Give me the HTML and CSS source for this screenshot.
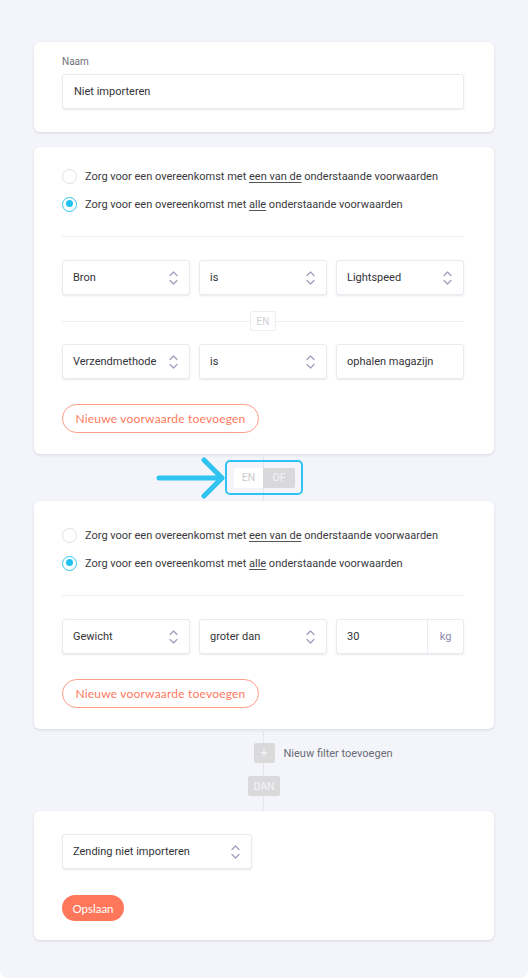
FILE: index.html
```html
<!DOCTYPE html>
<html lang="nl">
<head>
<meta charset="utf-8">
<title>Filter</title>
<link rel="stylesheet" href="styles.css">
</head>
<body>
<div class="page">
  <section class="card card-name">
    <div class="label">Naam</div>
    <div class="field">Niet importeren</div>
  </section>

  <section class="card card-cond">
    <div class="radios">
      <label class="radio"><span class="dot"></span><span>Zorg voor een overeenkomst met <u>een van de</u> onderstaande voorwaarden</span></label>
      <label class="radio"><span class="dot on"></span><span>Zorg voor een overeenkomst met <u>alle</u> onderstaande voorwaarden</span></label>
    </div>
    <div class="rule"></div>
    <div class="row">
      <div class="select">Bron<svg class="chev" viewBox="0 0 9 16"><path d="M1 5.5 4.5 2 8 5.5M1 10.5 4.5 14 8 10.5"/></svg></div>
      <div class="select">is<svg class="chev" viewBox="0 0 9 16"><path d="M1 5.5 4.5 2 8 5.5M1 10.5 4.5 14 8 10.5"/></svg></div>
      <div class="select">Lightspeed<svg class="chev" viewBox="0 0 9 16"><path d="M1 5.5 4.5 2 8 5.5M1 10.5 4.5 14 8 10.5"/></svg></div>
    </div>
    <div class="and-sep"><span class="tag">EN</span></div>
    <div class="row">
      <div class="select">Verzendmethode<svg class="chev" viewBox="0 0 9 16"><path d="M1 5.5 4.5 2 8 5.5M1 10.5 4.5 14 8 10.5"/></svg></div>
      <div class="select">is<svg class="chev" viewBox="0 0 9 16"><path d="M1 5.5 4.5 2 8 5.5M1 10.5 4.5 14 8 10.5"/></svg></div>
      <div class="select">ophalen magazijn</div>
    </div>
    <button class="btn-outline">Nieuwe voorwaarde toevoegen</button>
  </section>

  <div class="connector conn-toggle">
    <svg class="arrow" viewBox="0 0 72 42"><path d="M3 21H66M48 3 66 21 48 39"/></svg>
    <div class="toggle">
      <span class="seg seg-off">EN</span><span class="seg seg-on">OF</span>
    </div>
  </div>

  <section class="card card-cond card-cond2">
    <div class="radios">
      <label class="radio"><span class="dot"></span><span>Zorg voor een overeenkomst met <u>een van de</u> onderstaande voorwaarden</span></label>
      <label class="radio"><span class="dot on"></span><span>Zorg voor een overeenkomst met <u>alle</u> onderstaande voorwaarden</span></label>
    </div>
    <div class="rule"></div>
    <div class="row">
      <div class="select">Gewicht<svg class="chev" viewBox="0 0 9 16"><path d="M1 5.5 4.5 2 8 5.5M1 10.5 4.5 14 8 10.5"/></svg></div>
      <div class="select">groter dan<svg class="chev" viewBox="0 0 9 16"><path d="M1 5.5 4.5 2 8 5.5M1 10.5 4.5 14 8 10.5"/></svg></div>
      <div class="select with-unit"><span class="val">30</span><span class="unit">kg</span></div>
    </div>
    <button class="btn-outline btn-gap">Nieuwe voorwaarde toevoegen</button>
  </section>

  <div class="connector conn-add">
    <div class="add-row">
      <span></span>
      <span class="plus">+</span>
      <span class="add-text">Nieuw filter toevoegen</span>
    </div>
    <span class="dan">DAN</span>
  </div>

  <section class="card card-action">
    <div class="select action-select">Zending niet importeren<svg class="chev" viewBox="0 0 9 16"><path d="M1 5.5 4.5 2 8 5.5M1 10.5 4.5 14 8 10.5"/></svg></div>
    <button class="btn-primary">Opslaan</button>
  </section>
</div>
</body>
</html>
```

FILE: styles.css
```css
* { box-sizing: border-box; }
html, body { margin: 0; padding: 0; background: #ffffff; }
body { font-family: Roboto, "Liberation Sans", Arial, sans-serif; color: #333338; }

.page {
  width: 528px;
  min-height: 977px;
  background: #f4f5fa;
  border-radius: 0 0 8px 8px;
  padding: 42px 34px 38px;
  display: flex;
  flex-direction: column;
}

.card {
  background: #ffffff;
  border-radius: 6px;
  box-shadow: 0 1px 3px rgba(40, 45, 80, 0.14);
  padding: 0 30px 0 28px;
}

.card-name { padding-top: 13px; padding-bottom: 23px; height: 90px; }
.label { font-size: 10px; color: #707078; line-height: 14px; }
.field {
  margin-top: 5px;
  height: 35px;
  border: 1px solid #eaebf1;
  border-radius: 3px;
  box-shadow: 0 1px 2px rgba(40, 45, 90, 0.10);
  display: flex;
  align-items: center;
  padding-left: 11px;
  font-size: 11px;
  color: #333338;
}

.card-cond { margin-top: 15px; padding-top: 21px; padding-bottom: 21px; }
.card-cond2 { margin-top: 0; padding-top: 26px; }

.radios { display: flex; flex-direction: column; gap: 12px; }
.radio { display: flex; align-items: center; gap: 8px; height: 16px; font-size: 11px; color: #3a3a40; white-space: nowrap; }
.radio u { text-decoration-color: #555; text-underline-offset: 2px; }
.dot {
  width: 15px; height: 15px; flex: none;
  border-radius: 50%;
  border: 1.5px solid #dfe2e8;
  background: #fff;
  position: relative;
}
.dot.on { border-color: #2cc6f2; }
.dot.on::after {
  content: "";
  position: absolute;
  left: 2.5px; top: 2.5px;
  width: 7px; height: 7px;
  border-radius: 50%;
  background: #1fc2f3;
}

.rule { height: 1px; background: #eceef4; margin-top: 24px; margin-bottom: 23px; }

.row { display: grid; grid-template-columns: repeat(3, 1fr); gap: 9px; }
.select {
  height: 35px;
  border: 1px solid #eaebf1;
  border-radius: 3px;
  box-shadow: 0 1px 2px rgba(40, 45, 90, 0.10);
  display: flex;
  align-items: center;
  justify-content: space-between;
  padding: 0 11px 0 10px;
  font-size: 11px;
  color: #333338;
  background: #fff;
  white-space: nowrap;
}
.chev { width: 9px; height: 16px; flex: none; fill: none; stroke: #9c9ebc; stroke-width: 1.2; stroke-linecap: round; stroke-linejoin: round; }

.with-unit { padding-right: 0; }
.unit {
  width: 36px; height: 100%;
  border-left: 1px solid #eaebf1;
  display: flex; align-items: center; justify-content: center;
  color: #8a8cab;
  font-size: 11px;
}

.and-sep {
  height: 49px;
  display: flex; align-items: center; justify-content: center;
  position: relative;
}
.and-sep::before {
  content: "";
  position: absolute; left: 0; right: 0; top: 26px;
  height: 1px; background: #eceef4;
}
.and-sep .tag {
  position: relative;
  margin-top: 3px;
  width: 26px; height: 20px;
  border: 1px solid #eceef4;
  background: #fff;
  color: #cfd0d6;
  font-size: 10px;
  display: flex; align-items: center; justify-content: center;
  border-radius: 2px;
}

.btn-outline {
  margin-top: 25px;
  height: 29px;
  width: 197px;
  border: 1px solid #ff9d88;
  border-radius: 15px;
  background: #fff;
  color: #ff7a5e;
  font-family: Lato, "Open Sans", sans-serif;
  font-size: 12px;
  letter-spacing: 0.2px;
  padding: 0;
}
.btn-gap { margin-top: 25px; }

.connector { position: relative; display: flex; flex-direction: column; align-items: center; }
.connector::before {
  content: "";
  position: absolute; top: 0; bottom: 0; left: 229px;
  width: 1px; background: #e4e6ee;
}

.conn-toggle { height: 47px; justify-content: center; }
.toggle {
  position: relative;
  width: 78px; height: 35px;
  border: 2.5px solid #2ec3f0;
  border-radius: 5px;
  display: flex; align-items: center; justify-content: center;
  padding-left: 1px;
}
.seg { height: 20px; display: flex; align-items: center; justify-content: center; font-size: 10.5px; }
.seg-off { width: 29px; background: #fff; color: #c9c9cc; }
.seg-on { width: 32px; background: #d9d9db; color: #f4f4f6; border-radius: 0 2px 2px 0; }
.arrow {
  position: absolute;
  left: 122px; top: 3px;
  width: 72px; height: 42px;
  fill: none; stroke: #2ec3f0; stroke-width: 5; stroke-linecap: round; stroke-linejoin: round;
}

.conn-add { height: 82px; padding-top: 14px; gap: 13px; }
.add-row { display: grid; grid-template-columns: 1fr auto 1fr; align-items: center; width: 100%; position: relative; }
.plus {
  width: 21px; height: 20px;
  background: #dadadc; color: #f5f5f7;
  display: flex; align-items: center; justify-content: center;
  font-size: 12px; border-radius: 2px;
}
.add-text { padding-left: 9px; font-size: 11px; color: #6a6a78; }
.dan {
  position: relative;
  width: 32px; height: 20px;
  background: #dadadc; color: #f5f5f7;
  display: flex; align-items: center; justify-content: center;
  font-size: 10.5px; border-radius: 2px;
}

.card-action { padding-top: 23px; padding-bottom: 19px; display: flex; flex-direction: column; align-items: flex-start; }
.action-select { width: 190px; }
.btn-primary {
  margin-top: 26px;
  height: 26px; width: 62px;
  border: none; border-radius: 13px;
  background: #ff775b; color: #ffffff;
  font-family: Lato, "Open Sans", sans-serif;
  font-size: 11.5px;
  padding: 0;
}
```
